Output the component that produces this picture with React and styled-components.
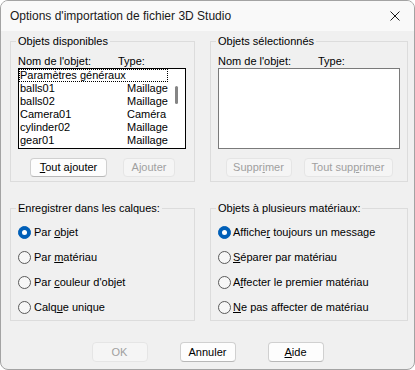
import React from "react";
import styled, { createGlobalStyle } from "styled-components";

const Global = createGlobalStyle`
  html, body { margin: 0; padding: 0; background: #ffffff; }
  * { box-sizing: border-box; }
`;

const Window = styled.div`
  width: 415px;
  height: 370px;
  border: 1px solid #a3a3a3;
  border-radius: 8px;
  overflow: hidden;
  background: #f0f0f0;
  display: flex;
  flex-direction: column;
  font-family: "Liberation Sans", Arial, sans-serif;
  font-size: 11px;
  color: #000;
`;

const TitleBar = styled.div`
  height: 30px;
  flex: none;
  background: #f9f9f9;
  display: flex;
  align-items: center;
  justify-content: space-between;
  padding: 0 14px 0 9px;
`;

const Title = styled.span`
  font-family: "Liberation Sans", Arial, sans-serif;
  font-size: 12px;
  color: #1a1a1a;
`;

const Body = styled.div`
  flex: 1;
  padding: 4px 0 0 9px;
  display: flex;
  flex-direction: column;
`;

const Groups = styled.div`
  display: grid;
  grid-template-columns: 185px 198px;
  grid-template-rows: 147px 119px;
  column-gap: 15px;
  row-gap: 20px;
`;

const Group = styled.fieldset`
  margin: 0;
  min-width: 0;
  border: 1px solid #dcdcdc;
  padding: ${(p) => (p.$radios ? "11px 7px 0 7px" : "7px 7px 0 7px")};
  display: flex;
  flex-direction: column;
  gap: ${(p) => (p.$radios ? "12px" : "0")};
`;

const Legend = styled.legend`
  padding: 0 2px;
  margin-left: -2px;
  line-height: 13px;
  font-size: 11px;
`;

const HeaderRow = styled.div`
  display: flex;
  line-height: 13px;
  height: 13px;
`;

const HeaderCell = styled.span`
  width: ${(p) => p.$w || "auto"};
`;

const ListBox = styled.div`
  width: ${(p) => p.$w}px;
  height: 81px;
  border: 1px solid ${(p) => (p.$focused ? "#000" : "#7a7a7a")};
  background: #fff;
  display: flex;
`;

const Rows = styled.div`
  width: 149px;
  display: flex;
  flex-direction: column;
`;

const Row = styled.div`
  height: 13px;
  line-height: 13px;
  display: flex;
  padding-left: 1px;
  white-space: nowrap;
  outline: ${(p) => (p.$focus ? "1px dotted #000" : "none")};
  outline-offset: -1px;
`;

const NameCell = styled.span`
  width: 107px;
`;

const ScrollTrack = styled.div`
  flex: 1;
  display: flex;
  justify-content: center;
  padding-top: 17px;
`;

const Thumb = styled.div`
  width: 3px;
  height: 18px;
  border-radius: 2px;
  background: #858585;
`;

const ButtonRow = styled.div`
  display: flex;
  justify-content: center;
  gap: ${(p) => p.$gap}px;
  margin-top: ${(p) => p.$mt}px;
`;

const Button = styled.button`
  width: ${(p) => p.$w}px;
  height: ${(p) => p.$h || 19}px;
  padding: 0;
  border-radius: 4px;
  font-family: "Liberation Sans", Arial, sans-serif;
  font-size: 11px;
  line-height: 13px;
  background: ${(p) => (p.disabled ? "#f5f5f5" : "#fdfdfd")};
  border: 1px solid ${(p) => (p.disabled ? "#e5e5e5" : "#d0d0d0")};
  border-bottom-color: ${(p) => (p.disabled ? "#e5e5e5" : "#b8b8b8")};
  color: ${(p) => (p.disabled ? "#a0a0a0" : "#000")};
  u { text-decoration-thickness: 1px; text-underline-offset: 1px; }
`;

const RadioRow = styled.label`
  display: flex;
  align-items: center;
  height: 13px;
  line-height: 13px;
  gap: ${(p) => p.$gap}px;
  white-space: nowrap;
  u { text-decoration-thickness: 1px; text-underline-offset: 1px; }
`;

const RadioCircle = styled.span`
  width: 13px;
  height: 13px;
  flex: none;
  border-radius: 50%;
  display: flex;
  align-items: center;
  justify-content: center;
  background: ${(p) => (p.$on ? "#005fb8" : "#f7f7f7")};
  border: 1px solid ${(p) => (p.$on ? "#005fb8" : "#5a5a5a")};
  &::after {
    content: "";
    display: ${(p) => (p.$on ? "block" : "none")};
    width: 5px;
    height: 5px;
    border-radius: 50%;
    background: #fff;
  }
`;

const Footer = styled.div`
  display: flex;
  justify-content: center;
  gap: 32px;
  margin-top: 21px;
  padding-right: 9px;
`;

const CloseIcon = () => (
  <svg width="10" height="10" viewBox="0 0 10 10">
    <path d="M0.5 0.5 L9.5 9.5 M9.5 0.5 L0.5 9.5" stroke="#1a1a1a" strokeWidth="1" fill="none" />
  </svg>
);

const available = [
  ["Paramètres généraux", ""],
  ["balls01", "Maillage"],
  ["balls02", "Maillage"],
  ["Camera01", "Caméra"],
  ["cylinder02", "Maillage"],
  ["gear01", "Maillage"],
];

function Radio({ on, gap, children }) {
  return (
    <RadioRow $gap={gap}>
      <RadioCircle $on={on} />
      <span>{children}</span>
    </RadioRow>
  );
}

export default function App() {
  return (
    <>
      <Global />
      <Window>
        <TitleBar>
          <Title>Options d'importation de fichier 3D Studio</Title>
          <CloseIcon />
        </TitleBar>
        <Body>
          <Groups>
            <Group>
              <Legend>Objets disponibles</Legend>
              <HeaderRow>
                <HeaderCell $w="100px">Nom de l'objet:</HeaderCell>
                <HeaderCell>Type:</HeaderCell>
              </HeaderRow>
              <ListBox $w={168} $focused>
                <Rows>
                  {available.map(([n, t], i) => (
                    <Row key={n} $focus={i === 0}>
                      <NameCell>{n}</NameCell>
                      <span>{t}</span>
                    </Row>
                  ))}
                </Rows>
                <ScrollTrack>
                  <Thumb />
                </ScrollTrack>
              </ListBox>
              <ButtonRow $gap={16} $mt={9}>
                <Button $w={77}><u>T</u>out ajouter</Button>
                <Button $w={52} disabled>Ajouter</Button>
              </ButtonRow>
            </Group>

            <Group>
              <Legend>Objets sélectionnés</Legend>
              <HeaderRow>
                <HeaderCell $w="100px">Nom de l'objet:</HeaderCell>
                <HeaderCell>Type:</HeaderCell>
              </HeaderRow>
              <ListBox $w={182} />
              <ButtonRow $gap={12} $mt={9}>
                <Button $w={66} disabled>Suppr<u>i</u>mer</Button>
                <Button $w={89} disabled>Tout sup<u>p</u>rimer</Button>
              </ButtonRow>
            </Group>

            <Group $radios>
              <Legend>Enregistrer dans les calques:</Legend>
              <Radio on gap={3}>Par <u>o</u>bjet</Radio>
              <Radio gap={3}>Par <u>m</u>atériau</Radio>
              <Radio gap={3}>Par <u>c</u>ouleur d'objet</Radio>
              <Radio gap={3}>Calq<u>u</u>e unique</Radio>
            </Group>

            <Group $radios>
              <Legend>Objets à plusieurs matériaux:</Legend>
              <Radio on gap={2}>Affiche<u>r</u> toujours un message</Radio>
              <Radio gap={2}><u>S</u>éparer par matériau</Radio>
              <Radio gap={2}>A<u>f</u>fecter le premier matériau</Radio>
              <Radio gap={2}><u>N</u>e pas affecter de matériau</Radio>
            </Group>
          </Groups>
          <Footer>
            <Button $w={56} $h={20} disabled>OK</Button>
            <Button $w={56} $h={20}>Annuler</Button>
            <Button $w={56} $h={20}><u>A</u>ide</Button>
          </Footer>
        </Body>
      </Window>
    </>
  );
}
